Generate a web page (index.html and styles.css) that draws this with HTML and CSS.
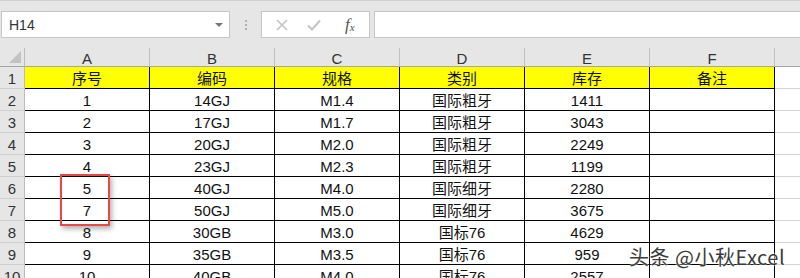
FILE: index.html
```html
<!DOCTYPE html>
<html lang="zh">
<head>
<meta charset="utf-8">
<link rel="stylesheet" href="styles.css">
</head>
<body>
<div class="app">
  <div class="topstrip"></div>
  <div class="fbar">
    <div class="namebox"><span class="ref">H14</span><span class="caret"></span></div>
    <div class="dots"><i></i><i></i><i></i></div>
    <div class="btns">
      <svg class="ic" width="14" height="14" viewBox="0 0 14 14"><path d="M2 2 L12 12 M12 2 L2 12" stroke="#c3c3c3" stroke-width="1.6" fill="none"/></svg>
      <svg class="ic" width="16" height="14" viewBox="0 0 16 14"><path d="M2 7.5 L6 11.5 L14 2.5" stroke="#c3c3c3" stroke-width="2" fill="none"/></svg>
      <span class="fx">f<sub>x</sub></span>
    </div>
    <div class="formula"></div>
  </div>
  <div class="gap"></div>
  <div class="sheet">
    <div class="corner"><span class="tri"></span></div>
    <div class="ch">A</div><div class="ch">B</div><div class="ch">C</div><div class="ch">D</div><div class="ch">E</div><div class="ch">F</div><div class="ch ch-last"></div>

    <div class="rh">1</div><div class="c hd">序号</div><div class="c hd">编码</div><div class="c hd">规格</div><div class="c hd">类别</div><div class="c hd">库存</div><div class="c hd">备注</div><div class="g"></div>
    <div class="rh">2</div><div class="c">1</div><div class="c">14GJ</div><div class="c">M1.4</div><div class="c">国际粗牙</div><div class="c">1411</div><div class="c"></div><div class="g"></div>
    <div class="rh">3</div><div class="c">2</div><div class="c">17GJ</div><div class="c">M1.7</div><div class="c">国际粗牙</div><div class="c">3043</div><div class="c"></div><div class="g"></div>
    <div class="rh">4</div><div class="c">3</div><div class="c">20GJ</div><div class="c">M2.0</div><div class="c">国际粗牙</div><div class="c">2249</div><div class="c"></div><div class="g"></div>
    <div class="rh">5</div><div class="c">4</div><div class="c">23GJ</div><div class="c">M2.3</div><div class="c">国际粗牙</div><div class="c">1199</div><div class="c"></div><div class="g"></div>
    <div class="rh">6</div><div class="c">5</div><div class="c">40GJ</div><div class="c">M4.0</div><div class="c">国际细牙</div><div class="c">2280</div><div class="c"></div><div class="g"></div>
    <div class="rh">7</div><div class="c">7</div><div class="c">50GJ</div><div class="c">M5.0</div><div class="c">国际细牙</div><div class="c">3675</div><div class="c"></div><div class="g"></div>
    <div class="rh">8</div><div class="c">8</div><div class="c">30GB</div><div class="c">M3.0</div><div class="c">国标76</div><div class="c">4629</div><div class="c"></div><div class="g"></div>
    <div class="rh">9</div><div class="c">9</div><div class="c">35GB</div><div class="c">M3.5</div><div class="c">国标76</div><div class="c">959</div><div class="c"></div><div class="g"></div>
    <div class="rh">10</div><div class="c">10</div><div class="c">40GB</div><div class="c">M4.0</div><div class="c">国标76</div><div class="c">2557</div><div class="c"></div><div class="g"></div>

    <div class="mark"></div>
  </div>
  <div class="watermark">头条 @小秋Excel</div>
</div>
</body>
</html>
```

FILE: styles.css
```css
* { box-sizing: border-box; }
html, body { margin: 0; padding: 0; }
body {
  width: 800px;
  height: 278px;
  overflow: hidden;
  background: #e6e6e6;
  font-family: "Liberation Sans", "Noto Sans CJK SC", sans-serif;
}
.app { position: relative; width: 800px; height: 278px; overflow: hidden; }

.topstrip {
  height: 11px;
  border-top: 1px solid #d2d2d2;
}

.fbar {
  display: flex;
  height: 27px;
}
.namebox {
  margin-left: 1px;
  width: 229px;
  background: #fff;
  border: 1px solid #c6c6c6;
  display: flex;
  align-items: center;
  justify-content: space-between;
  padding: 0 6px 0 7px;
}
.ref {
  font-family: "Liberation Sans", sans-serif;
  font-size: 14px;
  color: #333;
}
.caret {
  width: 0; height: 0;
  border-left: 4px solid transparent;
  border-right: 4px solid transparent;
  border-top: 4px solid #777;
}
.dots {
  width: 31px;
  display: flex;
  flex-direction: column;
  align-items: center;
  justify-content: center;
  gap: 2px;
}
.dots i {
  display: block;
  width: 2px; height: 2px;
  background: #b0b0b0;
}
.btns {
  width: 109px;
  background: #fff;
  border: 1px solid #c6c6c6;
  display: flex;
  align-items: center;
  padding-left: 13px;
  gap: 17px;
}
.fx {
  font-family: "Liberation Serif", serif;
  font-style: italic;
  font-size: 17px;
  color: #555;
  line-height: 1;
  margin-left: 6px;
}
.fx sub { font-size: 11px; vertical-align: -1px; }
.formula {
  margin-left: 4px;
  flex: 1;
  background: #fff;
  border: 1px solid #c6c6c6;
  border-right: none;
}
.gap { height: 10px; }

.sheet {
  position: relative;
  display: grid;
  grid-template-columns: 25px repeat(6, 125px) 1fr;
  grid-template-rows: 19px repeat(10, 22px);
  font-size: 15px;
  color: #111;
}
.corner {
  position: relative;
  border-right: 1px solid #bcbcbc;
  border-bottom: 1px solid #a6a6a6;
}
.tri {
  position: absolute;
  right: 3px;
  bottom: 3px;
  width: 0; height: 0;
  border-left: 12px solid transparent;
  border-bottom: 12px solid #c2c2c2;
}
.ch {
  border-right: 1px solid #c0c0c0;
  border-bottom: 1px solid #a6a6a6;
  display: flex;
  align-items: center;
  justify-content: center;
  padding-top: 3px;
  color: #333;
  font-size: 15px;
}
.ch-last { border-right: none; }
.rh {
  border-right: 1px solid #bcbcbc;
  border-bottom: 1px solid #cfcfcf;
  display: flex;
  align-items: center;
  justify-content: center;
  color: #333;
  padding-top: 2px;
}
.c {
  background: #fff;
  border-right: 1px solid #000;
  border-bottom: 1px solid #000;
  display: flex;
  align-items: center;
  justify-content: center;
  line-height: 1;
  padding-top: 1px;
}
.c.hd { background: #ffff00; }
.g {
  background: #fff;
  border-bottom: 1px solid #d4d4d4;
}
.mark {
  position: absolute;
  left: 60px;
  top: 126px;
  width: 50px;
  height: 52px;
  border: 2px solid #e84848;
  box-shadow: 2px 3px 5px rgba(0,0,0,0.3);
}
.watermark {
  position: absolute;
  left: 629px;
  top: 244px;
  font-family: "Noto Sans CJK SC", sans-serif;
  font-size: 20px;
  line-height: 26px;
  letter-spacing: 0.5px;
  color: #3c3c3c;
  text-shadow: 0 0 2px #fff, 0 0 2px #fff;
  white-space: nowrap;
}
```
